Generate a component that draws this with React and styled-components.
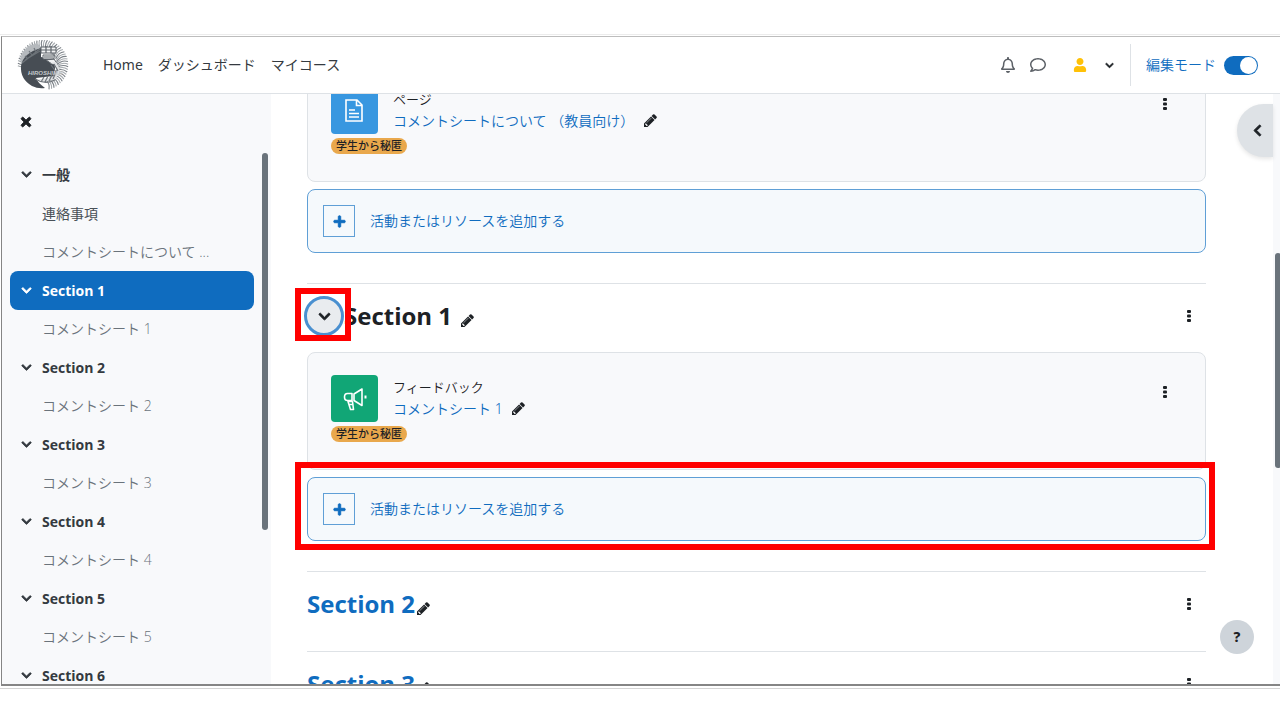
import React from "react";
import styled, { createGlobalStyle, css } from "styled-components";
import {
  FaRegBell,
  FaRegComment,
  FaUser,
  FaChevronDown,
  FaChevronLeft,
  FaTimes,
  FaPlus,
} from "react-icons/fa";

const GlobalStyle = createGlobalStyle`
  *, *::before, *::after { box-sizing: border-box; }
  body {
    margin: 0;
    background: #fff;
    color: #1d2125;
    font-family: "Noto Sans", "Noto Sans CJK JP", sans-serif;
    font-size: 14px;
    line-height: 20px;
  }
  button { font: inherit; color: inherit; }
  h2, h3, p, ul { margin: 0; padding: 0; }
  ul { list-style: none; }
`;

const blue = "#0f6cbf";

const heavy = css`
  stroke: currentColor;
  stroke-width: 36px;
`;

const HeavyDown = styled(FaChevronDown)`${heavy}`;
const HeavyLeft = styled(FaChevronLeft)`${heavy}`;
const HeavyTimes = styled(FaTimes)`${heavy}`;
const HeavyPlus = styled(FaPlus)`${heavy}`;

const Page = styled.div`
  display: flex;
  flex-direction: column;
  height: 100vh;
  padding: 34px 0 31px;
  overflow: hidden;
`;

const Outer = styled.div`
  flex: 1;
  min-height: 0;
  padding: 1px 0 2px 1px;
  border-top: 1px solid #ececec;
  border-bottom: 1px solid #d4d4d4;
`;

const Window = styled.div`
  position: relative;
  display: flex;
  flex-direction: column;
  height: 100%;
  border: solid #858585;
  border-width: 1px 0 2px 1px;
  border-top-color: #bdbdbd;
`;

const Header = styled.header`
  display: flex;
  align-items: center;
  flex: none;
  height: 57px;
  padding: 0 22px 0 15px;
  border-bottom: 1px solid #dee2e6;
`;

const Nav = styled.nav`
  display: flex;
  gap: 15px;
  flex: 1;
  margin-left: 34px;
`;

const NavLink = styled.a`
  color: #343a40;
  text-decoration: none;
`;

const IconButton = styled.button`
  display: inline-flex;
  align-items: center;
  justify-content: center;
  flex: none;
  width: 16px;
  height: 16px;
  padding: 0;
  border: 0;
  background: none;
  color: ${(p) => p.$color || "#1d2125"};
`;

const Tools = styled.div`
  display: flex;
  align-items: center;
  gap: 14px;
`;

const UserMenu = styled.button`
  display: flex;
  align-items: center;
  gap: 18px;
  margin: 0 2px 0 13px;
  padding: 0;
  border: 0;
  background: none;
`;

const EditMode = styled.label`
  display: flex;
  align-items: center;
  gap: 8px;
  height: 42px;
  padding-left: 15px;
  border-left: 1px solid #dee2e6;
  color: ${blue};
  font-weight: 350;
`;

const Switch = styled.input`
  appearance: none;
  display: flex;
  align-items: center;
  justify-content: flex-end;
  width: 34px;
  height: 19px;
  margin: 0;
  padding: 1px;
  border-radius: 10px;
  background: ${blue};
  &::before {
    content: "";
    width: 17px;
    height: 17px;
    border-radius: 50%;
    background: #fff;
  }
`;

const Body = styled.div`
  display: flex;
  flex: 1;
  min-height: 0;
`;

const Sidebar = styled.aside`
  display: flex;
  flex: none;
  width: 269px;
  overflow: hidden;
  background: #f8f9fb;
`;

const SidebarMain = styled.div`
  flex: 1;
  padding: 20px 8px 0;
`;

const CloseRow = styled.div`
  display: flex;
  height: 41px;
  padding-left: 8px;
`;

const Track = styled.div`
  flex: none;
  width: ${(p) => p.$w}px;
  padding-top: ${(p) => p.$top}px;
  background: #f8f9fb;
`;

const Thumb = styled.div`
  width: 6px;
  height: ${(p) => p.$h}px;
  margin-left: ${(p) => p.$left}px;
  border-radius: 3px;
  background: #6a737b;
`;

const IndexSection = styled.div`
  display: flex;
  align-items: center;
  gap: 10px;
  height: 39px;
  padding-left: 11px;
  border-radius: 8px;
  color: #343a40;
  font-weight: 700;
  svg { flex: none; }
  ${(p) => p.$active && css`
    background: ${blue};
    color: #fff;
  `}
`;

const IndexLink = styled.a`
  font-family: "Open Sans", "Noto Sans CJK JP", sans-serif;
  color: inherit;
  text-decoration: none;
`;

const IndexItem = styled.li`
  display: flex;
  align-items: center;
  height: ${(p) => (p.$hidden ? 38 : 39)}px;
  padding-left: 32px;
  color: ${(p) => (p.$hidden ? "#6a737b" : "#495057")};
  font-weight: ${(p) => (p.$hidden ? 350 : 400)};
  white-space: nowrap;
`;

const Main = styled.main`
  flex: 1;
  min-width: 0;
  padding: 0 67px 0 36px;
  overflow: hidden;
`;

const Scrolled = styled.div`
  margin-top: -30px;
`;

const Section = styled.section`
  padding-bottom: ${(p) => (p.$open ? 30 : 11)}px;
  border-bottom: 1px solid #dee2e6;
`;

const SectionHead = styled.div`
  display: flex;
  align-items: center;
  height: 64px;
  margin-bottom: 4px;
  padding-right: 9px;
`;

const SectionTitle = styled.h3`
  font-family: "Open Sans", "Noto Sans", sans-serif;
  font-size: 24px;
  line-height: 32px;
  font-weight: 700;
  color: ${(p) => (p.$link ? blue : "#1d2125")};
`;

const EditButton = styled(IconButton)`
  margin-left: ${(p) => p.$gap}px;
`;

const TitleGroup = styled.div`
  display: flex;
  align-items: center;
  flex: 1;
  min-width: 0;
  ${EditButton} {
    height: 24px;
    padding-top: 8px;
  }
`;

const ToggleWrap = styled.div`
  position: relative;
  flex: none;
  width: 40px;
  margin-left: -3px;
`;

const Toggle = styled.button`
  display: flex;
  align-items: center;
  justify-content: center;
  width: 40px;
  height: 40px;
  padding: 0;
  border: 3px solid #4a90d0;
  border-radius: 50%;
  background: #e9ecef;
`;

const Highlight = styled.div`
  position: absolute;
  inset: ${(p) => p.$inset};
  border: 6px solid #f00;
  pointer-events: none;
`;

const Card = styled.article`
  display: flex;
  align-items: flex-start;
  height: 118px;
  padding: 22px 32px 0 23px;
  border: 1px solid #dee2e6;
  border-radius: 8px;
  background: #f8f9fb;
`;

const CardMain = styled.div`
  flex: 1;
`;

const Activity = styled.div`
  display: flex;
  align-items: center;
  gap: 15px;
`;

const ActivityIcon = styled.div`
  display: flex;
  align-items: center;
  justify-content: center;
  width: 47px;
  height: 47px;
  border-radius: 4px;
  background: ${(p) => p.$bg};
`;

const Kind = styled.p`
  padding-bottom: 4px;
  font-size: 13px;
  line-height: 16px;
  font-weight: 350;
`;

const NameRow = styled.div`
  display: flex;
  align-items: center;
`;

const NameLink = styled.a`
  color: ${blue};
  font-weight: 350;
  text-decoration: none;
`;

const Badge = styled.span`
  display: block;
  width: fit-content;
  margin-top: 4px;
  padding: 0 5px;
  border-radius: 8px;
  background: #e9a84c;
  font-size: 11px;
  line-height: 16px;
  font-weight: 500;
`;

const CardMenu = styled.div`
  padding-top: 8px;
`;

const AddWrap = styled.div`
  position: relative;
  margin-top: 7px;
`;

const AddButton = styled.button`
  display: flex;
  align-items: center;
  gap: 15px;
  width: 100%;
  height: 64px;
  padding: 0 15px;
  border: 1px solid #5f9fd6;
  border-radius: 8px;
  background: #f5f9fc;
  color: ${blue};
  font-weight: 350;
`;

const PlusBox = styled.span`
  display: flex;
  align-items: center;
  justify-content: center;
  width: 32px;
  height: 32px;
  border: 1px solid #5f9fd6;
`;

const DrawerToggle = styled.button`
  position: absolute;
  top: 67px;
  right: 7px;
  display: flex;
  align-items: center;
  justify-content: center;
  width: 36px;
  height: 53px;
  padding: 0 0 0 5px;
  border: 0;
  border-radius: 27px 0 0 27px;
  background: #dee2e6;
  box-shadow: 0 2px 4px rgba(0, 0, 0, 0.1);
`;

const Help = styled.button`
  position: absolute;
  right: 26px;
  bottom: 30px;
  width: 34px;
  height: 34px;
  padding: 0;
  border: 0;
  border-radius: 50%;
  background: #ced4da;
  font-weight: 800;
`;

function Logo() {
  const leaves = [];
  for (let i = 0; i < 44; i++) {
    leaves.push(
      <path
        key={i}
        d="M26 11Q21 6 23 0"
        transform={`rotate(${-85 + i * 6} 26 25)`}
        fill="none"
        stroke={i % 2 ? "#7b8187" : "#a4a9ad"}
        strokeWidth="1.1"
      />
    );
  }
  return (
    <svg width="52" height="50" viewBox="0 0 52 50" role="img" aria-label="Hiroshima">
      {leaves}
      <path d="M3 20Q5 7 20 3L25 8Q12 11 6 24Z" fill="#b5b9bd" />
      <path d="M24 8Q6 13 4 26Q3 39 15 46Q21 49 28 48Q20 42 19 38L36 36Q40 28 36 20L24 17Z" fill="#474d54" />
      <path d="M5 23L24 8M8 16l3 3M12 11l3 4M17 8l2 4M8 20l15-9" stroke="#6d7379" strokeWidth="1.2" />
      <path d="M24 7h15v6H24zM26 15h11v4H26zM29 20l8-1 4 6-6-1z" fill="#f1f2f3" stroke="#5d6369" strokeWidth="1" />
      <path d="M29 6v7M34 6v7M24 10h15M27 17h9" stroke="#5d6369" strokeWidth="1.2" />
      <path d="M33 23Q42 24 40 33Q37 39 20 39Q31 44 39 38Q46 31 39 22Z" fill="#dfe1e3" />
      <path d="M34 25l5 7M37 24l4 7M24 42l3-5M28 42l3-6M32 41l3-6M36 39l3-7M18 39q10 6 20 1" fill="none" stroke="#6d7379" strokeWidth="1.2" />
      <text x="11" y="35" fontFamily="Liberation Sans" fontSize="6" fontWeight="700" fontStyle="italic" fill="#c4c8cb">HIROSHIMA</text>
    </svg>
  );
}

const PageIcon = () => (
  <svg width="24" height="24" viewBox="0 0 24 24" fill="none" stroke="#fff" strokeWidth="1.6" aria-hidden="true">
    <path d="M3 1h11l5 5v16H3z M13.500 1v5.500H19" />
    <path d="M6 11h6M6 14.500h10M6 18h10" />
  </svg>
);

const FeedbackIcon = () => (
  <svg width="24" height="24" viewBox="0 0 24 24" fill="none" stroke="#fff" strokeWidth="1.6" strokeLinejoin="round" aria-hidden="true">
    <path d="M9 6.500H4.500q-3 0-3 3.500t3 3.500H9z M11 7l8-5v16.500l-8-5z" />
    <path d="M22.500 8.500v3" strokeWidth="2" />
    <path d="M5 14.500h4.500l1 8H7.500z M6 17.500h4" />
  </svg>
);

const PencilIcon = () => (
  <svg width="13" height="13" viewBox="0 0 1536 1536" fill="#1d2125" aria-hidden="true">
    <path d="M363 1408l91-91-235-235-91 91v107h128v128h107zm523-928q0-22-22-22-10 0-17 7l-542 542q-7 7-7 17 0 22 22 22 10 0 17-7l542-542q7-7 7-17zm-54-192l416 416-832 832h-416v-416zm683 96q0 53-37 90l-166 166-416-416 166-165q36-38 90-38 53 0 91 38l235 234q37 39 37 91z" />
  </svg>
);

const Kebab = ({ label }) => (
  <IconButton aria-label={label}>
    <svg width="4" height="12" viewBox="0 0 4 12" fill="#1d2125" aria-hidden="true">
      <rect width="4" height="3" y="0" rx="1" />
      <rect width="4" height="3" y="4.500" rx="1" />
      <rect width="4" height="3" y="9" rx="1" />
    </svg>
  </IconButton>
);

function ActivityCard({ kind, name, bg, icon }) {
  return (
    <Card>
      <CardMain>
        <Activity>
          <ActivityIcon $bg={bg}>{icon}</ActivityIcon>
          <div>
            <Kind>{kind}</Kind>
            <NameRow>
              <NameLink href="#">{name}</NameLink>
              <EditButton $gap={8} aria-label="名称を編集する"><PencilIcon /></EditButton>
            </NameRow>
          </div>
        </Activity>
        <Badge>学生から秘匿</Badge>
      </CardMain>
      <CardMenu><Kebab label="操作" /></CardMenu>
    </Card>
  );
}

const AddActivity = ({ marked }) => (
  <AddWrap>
    <AddButton>
      <PlusBox><HeavyPlus size={13} /></PlusBox>
      活動またはリソースを追加する
    </AddButton>
    {marked && <Highlight $inset="-15px -9px -9px -12px" />}
  </AddWrap>
);

const index = [
  { title: "一般", items: [{ name: "連絡事項" }, { name: "コメントシートについて ...", hidden: true }] },
  ...[1, 2, 3, 4, 5].map((n) => ({
    title: `Section ${n}`,
    active: n === 1,
    items: [{ name: `コメントシート ${n}`, hidden: true }],
  })),
  { title: "Section 6", items: [] },
];

export default function App() {
  return (
    <>
      <GlobalStyle />
      <Page>
        <Outer>
          <Window>
            <Header>
              <Logo />
              <Nav>
                <NavLink href="#" lang="en">Home</NavLink>
                <NavLink href="#">ダッシュボード</NavLink>
                <NavLink href="#">マイコース</NavLink>
              </Nav>
              <Tools>
                <IconButton aria-label="通知" $color="#5c6167"><FaRegBell size={16} /></IconButton>
                <IconButton aria-label="メッセージ" $color="#5c6167"><FaRegComment size={16} /></IconButton>
                <UserMenu aria-label="ユーザメニュー">
                  <FaUser size={14} color="#ffc107" />
                  <HeavyDown size={9} />
                </UserMenu>
                <EditMode>
                  編集モード
                  <Switch type="checkbox" role="switch" defaultChecked />
                </EditMode>
              </Tools>
            </Header>
            <Body>
              <Sidebar>
                <SidebarMain>
                  <CloseRow>
                    <IconButton aria-label="閉じる"><HeavyTimes size={14} /></IconButton>
                  </CloseRow>
                  {index.map((s) => (
                    <div key={s.title}>
                      <IndexSection $active={s.active}>
                        <HeavyDown size={11} />
                        <IndexLink href="#">{s.title}</IndexLink>
                      </IndexSection>
                      <ul>
                        {s.items.map((it) => (
                          <IndexItem key={it.name} $hidden={it.hidden}>
                            <IndexLink href="#">{it.name}</IndexLink>
                          </IndexItem>
                        ))}
                      </ul>
                    </div>
                  ))}
                </SidebarMain>
                <Track $w={9} $top={59}><Thumb $h={377} $left={0} /></Track>
              </Sidebar>
              <Main>
                <Scrolled>
                  <Section $open>
                    <ActivityCard kind="ページ" name="コメントシートについて （教員向け）" bg="#3897e0" icon={<PageIcon />} />
                    <AddActivity />
                  </Section>
                  <Section $open>
                    <SectionHead>
                      <TitleGroup>
                        <ToggleWrap>
                          <Toggle aria-label="折りたたむ"><HeavyDown size={13} /></Toggle>
                          <Highlight $inset="-8px -7px -5px -9px" />
                        </ToggleWrap>
                        <SectionTitle>Section 1</SectionTitle>
                        <EditButton $gap={7} aria-label="セクション名を編集する"><PencilIcon /></EditButton>
                      </TitleGroup>
                      <Kebab label="編集" />
                    </SectionHead>
                    <ActivityCard kind="フィードバック" name="コメントシート 1" bg="#11a676" icon={<FeedbackIcon />} />
                    <AddActivity marked />
                  </Section>
                  {[2, 3].map((n) => (
                    <Section key={n}>
                      <SectionHead>
                        <TitleGroup>
                          <SectionTitle $link>Section {n}</SectionTitle>
                          <EditButton $gap={0} aria-label="セクション名を編集する"><PencilIcon /></EditButton>
                        </TitleGroup>
                        <Kebab label="編集" />
                      </SectionHead>
                    </Section>
                  ))}
                </Scrolled>
              </Main>
              <Track $w={7} $top={159}><Thumb $h={215} $left={2} /></Track>
            </Body>
            <DrawerToggle aria-label="ブロックドロワを開く"><HeavyLeft size={13} /></DrawerToggle>
            <Help>?</Help>
          </Window>
        </Outer>
      </Page>
    </>
  );
}
